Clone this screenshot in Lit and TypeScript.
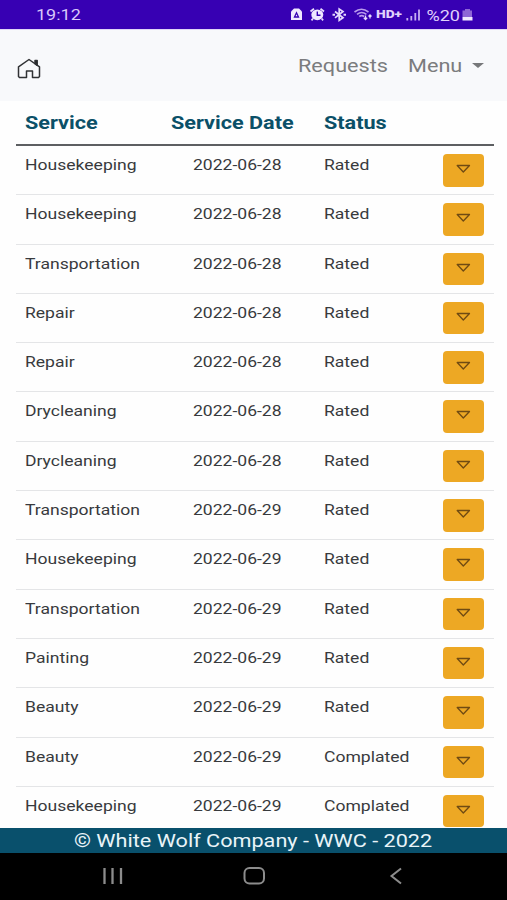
import { LitElement, html, css } from "lit";
import { customElement, property } from "lit/decorators.js";

type Row = { service: string; date: string; status: string };

const row = (service: string, day: number, status = "Rated"): Row => ({
  service,
  date: `2022-06-${day}`,
  status,
});

const ROWS: Row[] = [
  row("Housekeeping", 28),
  row("Housekeeping", 28),
  row("Transportation", 28),
  row("Repair", 28),
  row("Repair", 28),
  row("Drycleaning", 28),
  row("Drycleaning", 28),
  row("Transportation", 29),
  row("Housekeeping", 29),
  row("Transportation", 29),
  row("Painting", 29),
  row("Beauty", 29),
  row("Beauty", 29, "Complated"),
  row("Housekeeping", 29, "Complated"),
];

@customElement("status-bar")
class StatusBar extends LitElement {
  static styles = css`
    :host { display: flex; height: 29px; background: #3700b3; color: #d9c8fb; align-items: center; padding: 0 33px 0 35.500px; justify-content: space-between; box-sizing: border-box; }
    .time { font-size: 15.500px; line-height: 20px; transform: scaleX(1.16); transform-origin: left; padding-top: 1px; }
    .icons { display: block; width: 190px; height: 29px; }
    text { font-family: Roboto, sans-serif; fill: #e0d2fc; }
  `;
  render() {
    return html`
      <span class="time">19:12</span>
      <svg class="icons" viewBox="284 0 190 29" fill="none" stroke="#e6dafd">
        <path d="M294 8.500h5l3 3v8.500h-11v-8.500z" fill="#f0e8ff" stroke="none" />
        <path d="M294.500 17l2-4.200 2 4.200z" stroke="#3700b3" stroke-width="1.300" />
        <ellipse cx="317.300" cy="14.800" rx="6" ry="5.400" fill="#f0e8ff" stroke="none" />
        <path d="M310.500 11.500l3.500-2.700M324 11.500l-3.500-2.700M313 18.500l-1.500 1.800M321.600 18.500l1.500 1.800" stroke-width="1.800" />
        <path d="M317.300 11.500v3.700h3.200" stroke="#3700b3" stroke-width="1.400" />
        <path d="M335 11.500l8 6.300-3.800 2.500v-11.300l3.800 2.500-8 6.300" stroke-width="1.700" />
        <path d="M332.500 14.700h2.500M343.500 14.700h2.500" stroke-width="2" />
        <path d="M354.500 12q7-5.500 14 0M357 14.300q4.700-3.600 9.400 0M359.300 16.500q2.500-1.800 4.800 0" stroke="#b99cec" stroke-width="1.600" />
        <path d="M365.500 15.500v4M363.800 17.800l1.700 1.700 1.700-1.700M370 18.500v-3.500M368.500 16.500l1.500-1.500 1.500 1.500" stroke-width="1.300" />
        <text x="376" y="18.300" font-size="10" font-weight="900" textLength="26" lengthAdjust="spacingAndGlyphs" stroke="none">HD+</text>
        <path d="M407.300 18v2.500M411.300 16v4.500M415.300 13v7.500M419 9.500v11" stroke="#c7aef2" stroke-width="1.800" />
        <text x="426.500" y="20.500" font-size="15.500" textLength="33.500" lengthAdjust="spacingAndGlyphs" stroke="none">%20</text>
        <path d="M465 9h5v1.500h2v6.500h-9.500v-6.500h2.500z" fill="#8e66d6" stroke="none" />
        <path d="M462.500 17h10v3.500h-10z" fill="#f0e8ff" stroke="none" />
      </svg>
    `;
  }
}

@customElement("nav-bar")
class NavBar extends LitElement {
  static styles = css`
    :host { display: flex; height: 72px; box-sizing: border-box; background: #f8f9fb; padding: 0 23px 0 17px; align-items: center; color: #7b7c7e; border-top: 1px solid #dfd5f7; }
    .home { width: 24px; height: 22px; margin-top: 6px; }
    .links { display: flex; align-items: center; margin-left: auto; font-size: 19px; line-height: 24px; }
    .requests { width: 110px; }
    .menu { width: 64px; }
    .link { display: inline-block; transform: scaleX(1.14); transform-origin: left; white-space: nowrap; }
    .caret { width: 0; height: 0; border: 6.500px solid transparent; border-top: 5px solid #77787a; border-bottom: 0; }
  `;
  render() {
    return html`
      <svg class="home" viewBox="0 0 24 22" fill="none" stroke="#303234" stroke-width="1.500" stroke-linejoin="round">
        <path d="M1.500 8.800L12 1.500l10.500 7.300V18.500l-1 1h-6v-6.500h-6v6.500h-7l-1-1z" />
        <path d="M18 2.500h2.200v4.800l-2.200-1.700z" fill="#202224" />
      </svg>
      <div class="links">
        <div class="requests"><span class="link">Requests</span></div>
        <div class="menu"><span class="link">Menu</span></div>
        <i class="caret"></i>
      </div>
    `;
  }
}

@customElement("request-table")
class RequestTable extends LitElement {
  @property({ attribute: false }) rows: Row[] = [];
  static styles = css`
    :host { display: block; padding: 0 13.500px 0 16px; }
    .line { display: grid; grid-template-columns: 146px 153px 118.500px 41px; padding: 0 10px 0 9px; box-sizing: border-box; }
    .head { height: 45px; border-bottom: 2px solid #5d5f62; color: #0b5068; font-weight: 700; font-size: 17.500px; line-height: 44px; }
    .row { height: 49.300px; border-bottom: 1px solid #e4e5e7; color: #383a3d; font-size: 14.500px; line-height: 23px; padding-top: 8px; }
    .cell { white-space: nowrap; }
    .row .date { padding-left: 22px; }
    .text { display: inline-block; transform: scaleX(1.21); transform-origin: left; }
    .head .text { transform: scaleX(1.235); }
    .toggle { display: flex; justify-content: center; width: 41px; height: 32.500px; padding: 10px 0 0; border: 0; border-radius: 4px; background: #eda824; }
    .icon { width: 15px; height: 10px; }
  `;
  render() {
    return html`
      <div class="line head">
        <div class="cell"><span class="text">Service</span></div>
        <div class="cell"><span class="text">Service Date</span></div>
        <div class="cell"><span class="text">Status</span></div>
      </div>
      ${this.rows.map(
        (r) => html`
          <div class="line row">
            <div class="cell"><span class="text">${r.service}</span></div>
            <div class="cell date"><span class="text">${r.date}</span></div>
            <div class="cell"><span class="text">${r.status}</span></div>
            <button class="toggle" aria-label="Show details">
              <svg class="icon" viewBox="0 0 15 10" fill="none" stroke="#704b13" stroke-width="1.300" stroke-linejoin="round">
                <path d="M1.200 1.500h12.300L7.300 8z" />
              </svg>
            </button>
          </div>
        `
      )}
    `;
  }
}

@customElement("app-root")
class AppRoot extends LitElement {
  static styles = css`
    :host { display: flex; flex-direction: column; width: 507px; height: 900px; overflow: hidden; background: #fefefe; font-family: Roboto, sans-serif; }
    .content { height: 727px; overflow: hidden; flex: none; }
    .footer { height: 25px; flex: none; background: #09506c; color: #e9f4f8; text-align: center; font-size: 18.500px; line-height: 26px; }
    .copy { display: inline-block; transform: scaleX(1.17); white-space: nowrap; }
    .system { flex: 1; background: #000; }
    .keys { display: block; width: 507px; height: 47px; }
  `;
  render() {
    return html`
      <status-bar></status-bar>
      <nav-bar></nav-bar>
      <main class="content"><request-table .rows=${ROWS}></request-table></main>
      <footer class="footer"><span class="copy">© White Wolf Company - WWC - 2022</span></footer>
      <div class="system">
        <svg class="keys" viewBox="0 0 507 47" fill="none" stroke="#8c8c8c" stroke-width="2">
          <path d="M104.500 15v16M112.500 15v16M121 15v16" stroke-width="2.300" />
          <rect x="244.500" y="15" width="19.500" height="15.500" rx="5" />
          <path d="M401 15.500l-9.500 7.500 9.500 7.500" />
        </svg>
      </div>
    `;
  }
}
